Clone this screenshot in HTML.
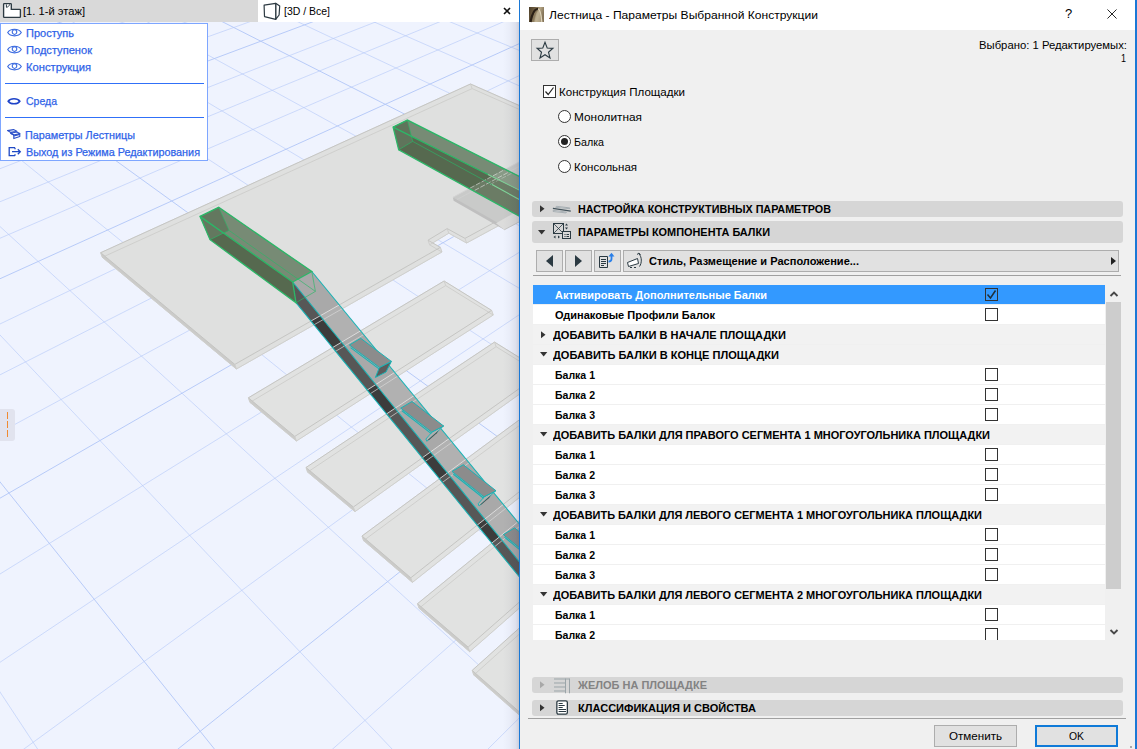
<!DOCTYPE html>
<html lang="ru"><head><meta charset="utf-8"><title>Лестница - Параметры Выбранной Конструкции</title>
<style>
*{box-sizing:border-box;margin:0;padding:0}
html,body{width:1137px;height:749px;overflow:hidden;background:#eff3fe}
body{position:relative;font-family:"Liberation Sans",sans-serif;font-size:12px;color:#000}
.t{position:absolute;white-space:nowrap;line-height:16px;height:16px;transform-origin:0 50%;display:block}
.abs{position:absolute}
#scene{position:absolute;left:0;top:0;width:519px;height:749px}
#tabs{position:absolute;left:0;top:0;width:519px;height:22px;background:#fff}
#tab1{position:absolute;left:0;top:0;width:258px;height:22px;background:#d9d9d9}
#menu{position:absolute;left:0;top:23px;width:208px;height:138px;background:#fff;border:1px solid #7ea6ff}
.sep{position:absolute;left:4px;width:199px;height:1px;background:#3070f8}
#dlg{position:absolute;left:519px;top:0;width:618px;height:749px;background:#f0f0f0;border-left:1px solid #1a78d6;border-right:2px solid #1a78d6}
#title{position:absolute;left:0;top:0;width:615px;height:30px;background:#fff}
.hdr{position:absolute;left:12px;width:591px;background:#d6d6d6;border-radius:3px}
.btn{position:absolute;background:#e1e1e1;border:1px solid #adadad}
.row{position:absolute;left:13px;width:572px;height:19px;background:#fff}
.grp{position:absolute;left:13px;width:572px;height:19px;background:#f2f2f2}
.cb{position:absolute;width:13px;height:13px;border:1px solid #333;background:#fff}
.rb{position:absolute;width:13px;height:13px;border:1px solid #333;background:#fff;border-radius:50%}
svg{position:absolute;overflow:visible}
</style></head><body>

<svg id="scene" width="519" height="749" viewBox="0 0 519 749" style="left:0;top:0;overflow:hidden">
<rect width="519" height="749" fill="#eff3fe"/>
<g stroke="#b4c8f8" stroke-width="1" fill="none">
<line x1="-199.6" y1="9.1" x2="534.4" y2="-189.2" stroke-opacity="0.6"/>
<line x1="-195.0" y1="24.5" x2="555.1" y2="-184.5" stroke-opacity="0.95"/>
<line x1="-195.3" y1="42.3" x2="576.6" y2="-179.7" stroke-opacity="0.6"/>
<line x1="-195.6" y1="61.4" x2="598.7" y2="-174.7" stroke-opacity="0.6"/>
<line x1="-195.9" y1="82.0" x2="621.6" y2="-169.5" stroke-opacity="0.6"/>
<line x1="-196.3" y1="104.1" x2="645.2" y2="-164.2" stroke-opacity="0.95"/>
<line x1="-196.7" y1="128.0" x2="669.7" y2="-158.7" stroke-opacity="0.6"/>
<line x1="-197.1" y1="153.9" x2="695.0" y2="-153.0" stroke-opacity="0.6"/>
<line x1="-197.6" y1="182.0" x2="721.2" y2="-147.1" stroke-opacity="0.6"/>
<line x1="-198.1" y1="212.7" x2="748.4" y2="-141.0" stroke-opacity="0.95"/>
<line x1="-198.6" y1="246.3" x2="776.6" y2="-134.7" stroke-opacity="0.6"/>
<line x1="-199.2" y1="283.3" x2="798.5" y2="-125.1" stroke-opacity="0.6"/>
<line x1="-199.9" y1="324.2" x2="798.7" y2="-105.2" stroke-opacity="0.6"/>
<line x1="-192.3" y1="365.8" x2="799.0" y2="-83.0" stroke-opacity="0.95"/>
<line x1="-192.6" y1="416.1" x2="799.4" y2="-58.4" stroke-opacity="0.6"/>
<line x1="-193.0" y1="472.7" x2="799.7" y2="-30.7" stroke-opacity="0.6"/>
<line x1="-193.4" y1="536.8" x2="797.7" y2="2.0" stroke-opacity="0.6"/>
<line x1="-193.9" y1="610.0" x2="798.0" y2="38.0" stroke-opacity="0.95"/>
<line x1="-194.5" y1="694.5" x2="798.4" y2="79.4" stroke-opacity="0.6"/>
<line x1="-195.1" y1="792.9" x2="798.8" y2="127.6" stroke-opacity="0.6"/>
<line x1="-195.9" y1="909.1" x2="799.3" y2="184.4" stroke-opacity="0.6"/>
<line x1="-124.2" y1="990.4" x2="799.8" y2="252.4" stroke-opacity="0.95"/>
<line x1="50.7" y1="998.4" x2="796.5" y2="338.8" stroke-opacity="0.6"/>
<line x1="239.7" y1="995.2" x2="796.9" y2="442.7" stroke-opacity="0.6"/>
<line x1="428.6" y1="992.0" x2="797.4" y2="575.8" stroke-opacity="0.6"/>
<line x1="617.4" y1="988.7" x2="798.0" y2="752.0" stroke-opacity="0.95"/>
<line x1="-198.7" y1="632.6" x2="-9.9" y2="997.9" stroke-opacity="0.6"/>
<line x1="-198.5" y1="391.0" x2="197.5" y2="991.5" stroke-opacity="0.6"/>
<line x1="-198.4" y1="234.8" x2="411.9" y2="995.0" stroke-opacity="0.95"/>
<line x1="-199.9" y1="123.9" x2="628.3" y2="998.5" stroke-opacity="0.6"/>
<line x1="-199.7" y1="43.6" x2="793.7" y2="953.5" stroke-opacity="0.6"/>
<line x1="-143.1" y1="27.3" x2="799.8" y2="789.6" stroke-opacity="0.6"/>
<line x1="-89.7" y1="12.0" x2="796.5" y2="652.8" stroke-opacity="0.95"/>
<line x1="-39.2" y1="-2.6" x2="793.8" y2="542.1" stroke-opacity="0.6"/>
<line x1="8.6" y1="-16.3" x2="798.3" y2="454.7" stroke-opacity="0.6"/>
<line x1="53.9" y1="-29.4" x2="795.9" y2="377.3" stroke-opacity="0.6"/>
<line x1="97.0" y1="-41.8" x2="799.6" y2="314.3" stroke-opacity="0.95"/>
<line x1="138.0" y1="-53.5" x2="797.5" y2="257.1" stroke-opacity="0.6"/>
<line x1="177.0" y1="-64.8" x2="795.6" y2="207.4" stroke-opacity="0.6"/>
<line x1="214.2" y1="-75.5" x2="798.6" y2="165.7" stroke-opacity="0.6"/>
<line x1="249.7" y1="-85.7" x2="796.9" y2="126.9" stroke-opacity="0.95"/>
<line x1="283.6" y1="-95.4" x2="799.6" y2="93.8" stroke-opacity="0.6"/>
<line x1="316.1" y1="-104.7" x2="798.0" y2="62.6" stroke-opacity="0.6"/>
<line x1="347.1" y1="-113.7" x2="796.5" y2="34.5" stroke-opacity="0.6"/>
</g>
<g fill="#dfe0df" stroke="#dfe0df" stroke-width=".6">
<polygon points="102.3,257.3 472.1,88.6 561.6,128.1 561.6,191.6 466.6,243.0 448.8,233.2 429.6,244.8 441.9,252.0 236.4,369.0"/>
<polygon points="100.7,252.7 470.5,84.0 472.1,88.6 102.3,257.3"/>
<polygon points="470.5,84.0 560.0,123.5 561.6,128.1 472.1,88.6"/>
<polygon points="560.0,123.5 560.0,187.0 561.6,191.6 561.6,128.1"/>
<polygon points="560.0,187.0 465.0,238.4 466.6,243.0 561.6,191.6"/>
<polygon points="465.0,238.4 447.2,228.6 448.8,233.2 466.6,243.0"/>
<polygon points="447.2,228.6 428.0,240.2 429.6,244.8 448.8,233.2"/>
<polygon points="428.0,240.2 440.3,247.4 441.9,252.0 429.6,244.8"/>
<polygon points="440.3,247.4 234.8,364.4 236.4,369.0 441.9,252.0"/>
<polygon points="234.8,364.4 100.7,252.7 102.3,257.3 236.4,369.0"/>
<polygon points="100.7,252.7 470.5,84.0 560.0,123.5 560.0,187.0 465.0,238.4 447.2,228.6 428.0,240.2 440.3,247.4 234.8,364.4"/>
</g>
<polygon points="234.8,364.4 100.7,252.7 102.3,257.3 236.4,369.0" fill="#cbcbc9" />
<polygon points="102.3,257.3 472.1,88.6 561.6,128.1 561.6,191.6 466.6,243.0 448.8,233.2 429.6,244.8 441.9,252.0 236.4,369.0" fill="none" stroke="#cdcdcb" stroke-width=".9"/>
<polygon points="100.7,252.7 470.5,84.0 560.0,123.5 560.0,187.0 465.0,238.4 447.2,228.6 428.0,240.2 440.3,247.4 234.8,364.4" fill="none" stroke="#c2c2c0" stroke-width=".9"/>
<line x1="100.7" y1="252.7" x2="102.3" y2="257.3" stroke="#cdcdcb" stroke-width=".9"/>
<line x1="470.5" y1="84.0" x2="472.1" y2="88.6" stroke="#cdcdcb" stroke-width=".9"/>
<line x1="560.0" y1="123.5" x2="561.6" y2="128.1" stroke="#cdcdcb" stroke-width=".9"/>
<line x1="560.0" y1="187.0" x2="561.6" y2="191.6" stroke="#cdcdcb" stroke-width=".9"/>
<line x1="465.0" y1="238.4" x2="466.6" y2="243.0" stroke="#cdcdcb" stroke-width=".9"/>
<line x1="447.2" y1="228.6" x2="448.8" y2="233.2" stroke="#cdcdcb" stroke-width=".9"/>
<line x1="428.0" y1="240.2" x2="429.6" y2="244.8" stroke="#cdcdcb" stroke-width=".9"/>
<line x1="440.3" y1="247.4" x2="441.9" y2="252.0" stroke="#cdcdcb" stroke-width=".9"/>
<line x1="234.8" y1="364.4" x2="236.4" y2="369.0" stroke="#cdcdcb" stroke-width=".9"/>
<g fill="#e1e2e1" stroke="#e1e2e1" stroke-width=".6">
<polygon points="250.0,402.4 445.7,285.6 493.2,315.0 296.4,441.0"/>
<polygon points="248.4,397.8 444.1,281.0 445.7,285.6 250.0,402.4"/>
<polygon points="444.1,281.0 491.6,310.4 493.2,315.0 445.7,285.6"/>
<polygon points="491.6,310.4 294.8,436.4 296.4,441.0 493.2,315.0"/>
<polygon points="294.8,436.4 248.4,397.8 250.0,402.4 296.4,441.0"/>
<polygon points="248.4,397.8 444.1,281.0 491.6,310.4 294.8,436.4"/>
</g>
<polygon points="294.8,436.4 248.4,397.8 250.0,402.4 296.4,441.0" fill="#cbcbc9" />
<polygon points="250.0,402.4 445.7,285.6 493.2,315.0 296.4,441.0" fill="none" stroke="#cdcdcb" stroke-width=".9"/>
<polygon points="248.4,397.8 444.1,281.0 491.6,310.4 294.8,436.4" fill="none" stroke="#c2c2c0" stroke-width=".9"/>
<line x1="248.4" y1="397.8" x2="250.0" y2="402.4" stroke="#cdcdcb" stroke-width=".9"/>
<line x1="444.1" y1="281.0" x2="445.7" y2="285.6" stroke="#cdcdcb" stroke-width=".9"/>
<line x1="491.6" y1="310.4" x2="493.2" y2="315.0" stroke="#cdcdcb" stroke-width=".9"/>
<line x1="294.8" y1="436.4" x2="296.4" y2="441.0" stroke="#cdcdcb" stroke-width=".9"/>
<g fill="#e1e2e1" stroke="#e1e2e1" stroke-width=".6">
<polygon points="307.6,472.1 496.1,346.7 544.2,376.5 355.0,511.6"/>
<polygon points="306.0,467.5 494.5,342.1 496.1,346.7 307.6,472.1"/>
<polygon points="494.5,342.1 542.6,371.9 544.2,376.5 496.1,346.7"/>
<polygon points="542.6,371.9 353.4,507.0 355.0,511.6 544.2,376.5"/>
<polygon points="353.4,507.0 306.0,467.5 307.6,472.1 355.0,511.6"/>
<polygon points="306.0,467.5 494.5,342.1 542.6,371.9 353.4,507.0"/>
</g>
<polygon points="353.4,507.0 306.0,467.5 307.6,472.1 355.0,511.6" fill="#cbcbc9" />
<polygon points="307.6,472.1 496.1,346.7 544.2,376.5 355.0,511.6" fill="none" stroke="#cdcdcb" stroke-width=".9"/>
<polygon points="306.0,467.5 494.5,342.1 542.6,371.9 353.4,507.0" fill="none" stroke="#c2c2c0" stroke-width=".9"/>
<line x1="306.0" y1="467.5" x2="307.6" y2="472.1" stroke="#cdcdcb" stroke-width=".9"/>
<line x1="494.5" y1="342.1" x2="496.1" y2="346.7" stroke="#cdcdcb" stroke-width=".9"/>
<line x1="542.6" y1="371.9" x2="544.2" y2="376.5" stroke="#cdcdcb" stroke-width=".9"/>
<line x1="353.4" y1="507.0" x2="355.0" y2="511.6" stroke="#cdcdcb" stroke-width=".9"/>
<g fill="#e1e2e1" stroke="#e1e2e1" stroke-width=".6">
<polygon points="363.6,540.6 545.1,406.6 594.2,438.2 412.4,582.4"/>
<polygon points="362.0,536.0 543.5,402.0 545.1,406.6 363.6,540.6"/>
<polygon points="543.5,402.0 592.6,433.6 594.2,438.2 545.1,406.6"/>
<polygon points="592.6,433.6 410.8,577.8 412.4,582.4 594.2,438.2"/>
<polygon points="410.8,577.8 362.0,536.0 363.6,540.6 412.4,582.4"/>
<polygon points="362.0,536.0 543.5,402.0 592.6,433.6 410.8,577.8"/>
</g>
<polygon points="410.8,577.8 362.0,536.0 363.6,540.6 412.4,582.4" fill="#cbcbc9" />
<polygon points="363.6,540.6 545.1,406.6 594.2,438.2 412.4,582.4" fill="none" stroke="#cdcdcb" stroke-width=".9"/>
<polygon points="362.0,536.0 543.5,402.0 592.6,433.6 410.8,577.8" fill="none" stroke="#c2c2c0" stroke-width=".9"/>
<line x1="362.0" y1="536.0" x2="363.6" y2="540.6" stroke="#cdcdcb" stroke-width=".9"/>
<line x1="543.5" y1="402.0" x2="545.1" y2="406.6" stroke="#cdcdcb" stroke-width=".9"/>
<line x1="592.6" y1="433.6" x2="594.2" y2="438.2" stroke="#cdcdcb" stroke-width=".9"/>
<line x1="410.8" y1="577.8" x2="412.4" y2="582.4" stroke="#cdcdcb" stroke-width=".9"/>
<g fill="#e1e2e1" stroke="#e1e2e1" stroke-width=".6">
<polygon points="419.1,608.3 593.7,465.9 644.1,498.6 469.7,651.7"/>
<polygon points="417.5,603.7 592.1,461.3 593.7,465.9 419.1,608.3"/>
<polygon points="592.1,461.3 642.5,494.0 644.1,498.6 593.7,465.9"/>
<polygon points="642.5,494.0 468.1,647.1 469.7,651.7 644.1,498.6"/>
<polygon points="468.1,647.1 417.5,603.7 419.1,608.3 469.7,651.7"/>
<polygon points="417.5,603.7 592.1,461.3 642.5,494.0 468.1,647.1"/>
</g>
<polygon points="468.1,647.1 417.5,603.7 419.1,608.3 469.7,651.7" fill="#cbcbc9" />
<polygon points="419.1,608.3 593.7,465.9 644.1,498.6 469.7,651.7" fill="none" stroke="#cdcdcb" stroke-width=".9"/>
<polygon points="417.5,603.7 592.1,461.3 642.5,494.0 468.1,647.1" fill="none" stroke="#c2c2c0" stroke-width=".9"/>
<line x1="417.5" y1="603.7" x2="419.1" y2="608.3" stroke="#cdcdcb" stroke-width=".9"/>
<line x1="592.1" y1="461.3" x2="593.7" y2="465.9" stroke="#cdcdcb" stroke-width=".9"/>
<line x1="642.5" y1="494.0" x2="644.1" y2="498.6" stroke="#cdcdcb" stroke-width=".9"/>
<line x1="468.1" y1="647.1" x2="469.7" y2="651.7" stroke="#cdcdcb" stroke-width=".9"/>
<g fill="#e1e2e1" stroke="#e1e2e1" stroke-width=".6">
<polygon points="473.8,675.0 641.6,524.3 694.2,559.8 527.2,722.0"/>
<polygon points="472.2,670.4 640.0,519.7 641.6,524.3 473.8,675.0"/>
<polygon points="640.0,519.7 692.6,555.2 694.2,559.8 641.6,524.3"/>
<polygon points="692.6,555.2 525.6,717.4 527.2,722.0 694.2,559.8"/>
<polygon points="525.6,717.4 472.2,670.4 473.8,675.0 527.2,722.0"/>
<polygon points="472.2,670.4 640.0,519.7 692.6,555.2 525.6,717.4"/>
</g>
<polygon points="525.6,717.4 472.2,670.4 473.8,675.0 527.2,722.0" fill="#cbcbc9" />
<polygon points="473.8,675.0 641.6,524.3 694.2,559.8 527.2,722.0" fill="none" stroke="#cdcdcb" stroke-width=".9"/>
<polygon points="472.2,670.4 640.0,519.7 692.6,555.2 525.6,717.4" fill="none" stroke="#c2c2c0" stroke-width=".9"/>
<line x1="472.2" y1="670.4" x2="473.8" y2="675.0" stroke="#cdcdcb" stroke-width=".9"/>
<line x1="640.0" y1="519.7" x2="641.6" y2="524.3" stroke="#cdcdcb" stroke-width=".9"/>
<line x1="692.6" y1="555.2" x2="694.2" y2="559.8" stroke="#cdcdcb" stroke-width=".9"/>
<line x1="525.6" y1="717.4" x2="527.2" y2="722.0" stroke="#cdcdcb" stroke-width=".9"/>
<polygon points="452.9,197.3 518.8,162.0 560.0,181.0 560.0,201.0 504.3,229.5" fill="#c9cac9"/>
<polygon points="452.9,197.3 503.8,226.2 504.3,229.8 453.6,200.8" fill="#bfbfbf"/>
<polygon points="496.0,223.2 519.0,210.2 519.0,222.0 504.3,229.8" fill="#dcdcdb"/>
<polyline points="452.9,197.3 518.8,162.0" fill="none" stroke="#d4d4d4" stroke-width="1"/>
<polyline points="457.0,199.5 519.0,166.5" fill="none" stroke="#d0d0d0" stroke-width=".8"/>
<polyline points="504.3,229.8 519.0,222.0" fill="none" stroke="#c2c2c0" stroke-width=".9"/>
<polygon points="393.1,127.1 407.4,120.1 560.0,197.0 560.0,238.5 398.7,149.8" fill="#56694f"/>
<polygon points="393.1,127.1 407.4,120.1 560.0,197.0 560.0,210.5" fill="#778b75"/>
<polygon points="393.1,127.1 407.4,120.1 412.7,141.4 398.7,149.8" fill="#5f745b"/>
<defs><clipPath id="b2c"><polygon points="393.1,127.1 407.4,120.1 560.0,197.0 560.0,238.5 398.7,149.8"/></clipPath></defs>
<g clip-path="url(#b2c)"><polygon points="452.9,197.3 518.8,162.0 560.0,181.0 560.0,201.0 504.3,229.5" fill="#fff" fill-opacity=".13"/>
<g fill="none" stroke="#f2f2f2" stroke-width=".9" stroke-dasharray="5 1.500" stroke-opacity=".6"><polyline points="452.9,197.3 518.8,162.0"/><polyline points="457.5,199.6 519.0,166.6"/><polyline points="490.0,184.5 519.0,169.5" stroke-opacity=".35"/></g></g>
<g fill="none" stroke="#2bb868" stroke-width="1.3"><polygon points="393.1,127.1 407.4,120.1 560.0,197.0 560.0,238.5 398.7,149.8"/><polyline points="393.1,127.1 488.0,174.5"/></g>
<g fill="none" stroke="#7fd69a" stroke-width="1.1"><polyline points="488.0,174.5 560.0,210.5"/><polyline points="492.0,184.6 560.0,221.5"/></g>
<g fill="none" stroke="#2bb868" stroke-width=".8" opacity=".8"><polyline points="407.4,120.1 412.7,141.4 398.7,149.8"/><polyline points="412.7,141.4 492.0,184.6"/></g>
<polygon points="200.0,216.4 218.7,207.3 311.8,271.5 292.7,282.0 296.0,302.7 210.0,239.7" fill="#56694f"/>
<polygon points="200.0,216.4 218.7,207.3 311.8,271.5 292.7,282.0" fill="#778b75"/>
<polygon points="200.0,216.4 218.7,207.3 229.0,230.4 210.0,239.7" fill="#63785f"/>
<defs><clipPath id="strc">
<polygon points="292.7,282.0 311.8,271.5 598.3,620.0 554.5,620.0 296.0,302.7"/>
</clipPath></defs>
<polygon points="292.7,282.0 311.8,271.5 598.3,620.0 566.5,620.0" fill="#b1b1b1"/>
<polygon points="292.7,282.0 566.5,620.0 554.5,620.0 296.0,302.7" fill="#3c3c3c"/>
<g clip-path="url(#strc)">
<g fill="#999" fill-opacity=".3" stroke="none"><polygon points="100.7,252.7 470.5,84.0 560.0,123.5 560.0,187.0 465.0,238.4 447.2,228.6 428.0,240.2 440.3,247.4 234.8,364.4"/></g>
<g fill="#999" fill-opacity=".3" stroke="none"><polygon points="248.4,397.8 444.1,281.0 491.6,310.4 294.8,436.4"/></g>
<g fill="#999" fill-opacity=".3" stroke="none"><polygon points="306.0,467.5 494.5,342.1 542.6,371.9 353.4,507.0"/></g>
<g fill="#999" fill-opacity=".3" stroke="none"><polygon points="362.0,536.0 543.5,402.0 592.6,433.6 410.8,577.8"/></g>
<g fill="#999" fill-opacity=".3" stroke="none"><polygon points="417.5,603.7 592.1,461.3 642.5,494.0 468.1,647.1"/></g>
<g fill="#999" fill-opacity=".3" stroke="none"><polygon points="472.2,670.4 640.0,519.7 692.6,555.2 525.6,717.4"/></g>
<polygon points="100.7,252.7 470.5,84.0 560.0,123.5 560.0,187.0 465.0,238.4 447.2,228.6 428.0,240.2 440.3,247.4 234.8,364.4" fill="none" stroke="#e4e4e4" stroke-width="1" stroke-opacity=".85"/>
<polygon points="102.3,257.3 472.1,88.6 561.6,128.1 561.6,191.6 466.6,243.0 448.8,233.2 429.6,244.8 441.9,252.0 236.4,369.0" fill="none" stroke="#d8d8d8" stroke-width="1" stroke-opacity=".7"/>
<polygon points="248.4,397.8 444.1,281.0 491.6,310.4 294.8,436.4" fill="none" stroke="#e4e4e4" stroke-width="1" stroke-opacity=".85"/>
<polygon points="250.0,402.4 445.7,285.6 493.2,315.0 296.4,441.0" fill="none" stroke="#d8d8d8" stroke-width="1" stroke-opacity=".7"/>
<polygon points="306.0,467.5 494.5,342.1 542.6,371.9 353.4,507.0" fill="none" stroke="#e4e4e4" stroke-width="1" stroke-opacity=".85"/>
<polygon points="307.6,472.1 496.1,346.7 544.2,376.5 355.0,511.6" fill="none" stroke="#d8d8d8" stroke-width="1" stroke-opacity=".7"/>
<polygon points="362.0,536.0 543.5,402.0 592.6,433.6 410.8,577.8" fill="none" stroke="#e4e4e4" stroke-width="1" stroke-opacity=".85"/>
<polygon points="363.6,540.6 545.1,406.6 594.2,438.2 412.4,582.4" fill="none" stroke="#d8d8d8" stroke-width="1" stroke-opacity=".7"/>
<polygon points="417.5,603.7 592.1,461.3 642.5,494.0 468.1,647.1" fill="none" stroke="#e4e4e4" stroke-width="1" stroke-opacity=".85"/>
<polygon points="419.1,608.3 593.7,465.9 644.1,498.6 469.7,651.7" fill="none" stroke="#d8d8d8" stroke-width="1" stroke-opacity=".7"/>
<polygon points="472.2,670.4 640.0,519.7 692.6,555.2 525.6,717.4" fill="none" stroke="#e4e4e4" stroke-width="1" stroke-opacity=".85"/>
<polygon points="473.8,675.0 641.6,524.3 694.2,559.8 527.2,722.0" fill="none" stroke="#d8d8d8" stroke-width="1" stroke-opacity=".7"/>
</g>
<g fill="none" stroke="#17b4b6" stroke-width="1.05"><polyline points="311.8,271.5 598.3,620.0"/><polyline points="292.7,282.0 566.5,620.0"/><polyline points="296.0,302.7 554.5,620.0"/></g>
<polygon points="379.4,367.4 391.4,361.4 386.0,372.0 375.4,377.4" fill="#5c5c5c" stroke="#17b4b6" stroke-width="1"/>
<polygon points="349.4,345.0 360.7,338.3 391.4,361.4 379.4,367.4" fill="#8c8c8c" stroke="#17b4b6" stroke-width="1"/>
<polyline points="350.6,347.6 379.0,368.9" fill="none" stroke="#17b4b6" stroke-width="1.1"/>
<polygon points="432.1,432.0 443.5,425.8 439.1,430.2 426.8,441.3 425.9,439.0" fill="#b0b0b0" stroke="#17b4b6" stroke-width=".9"/>
<polygon points="438.6,430.5 427.5,440.3 429.1,439.9 436.8,433.2" fill="#4c4c4c"/>
<polygon points="400.7,408.2 412.0,401.5 443.7,426.1 431.7,432.1" fill="#8c8c8c" stroke="#17b4b6" stroke-width="1"/>
<polyline points="401.9,410.8 431.3,433.6" fill="none" stroke="#17b4b6" stroke-width="1.1"/>
<polygon points="484.4,496.7 495.8,490.5 491.4,494.9 479.1,506.0 478.2,503.7" fill="#b0b0b0" stroke="#17b4b6" stroke-width=".9"/>
<polygon points="490.9,495.2 479.8,505.0 481.4,504.6 489.1,497.9" fill="#4c4c4c"/>
<polygon points="452.0,471.4 463.3,464.7 496.0,490.8 484.0,496.8" fill="#8c8c8c" stroke="#17b4b6" stroke-width="1"/>
<polyline points="453.2,474.0 483.6,498.3" fill="none" stroke="#17b4b6" stroke-width="1.1"/>
<polygon points="536.7,561.4 548.1,555.2 543.7,559.6 531.4,570.7 530.5,568.4" fill="#b0b0b0" stroke="#17b4b6" stroke-width=".9"/>
<polygon points="543.2,559.9 532.1,569.7 533.7,569.3 541.4,562.6" fill="#4c4c4c"/>
<polygon points="503.3,534.6 514.6,527.9 548.3,555.5 536.3,561.5" fill="#8c8c8c" stroke="#17b4b6" stroke-width="1"/>
<polyline points="504.5,537.2 535.9,563.0" fill="none" stroke="#17b4b6" stroke-width="1.1"/>
<g fill="none" stroke="#2bb868" stroke-width="1.3"><polygon points="200.0,216.4 218.7,207.3 311.8,271.5 292.7,282.0 296.0,302.7 210.0,239.7"/><polyline points="200.0,216.4 292.7,282.0"/></g>
<g fill="none" stroke="#2bb868" stroke-width=".8" opacity=".8"><polyline points="218.7,207.3 229.0,230.4 210.0,239.7"/><polyline points="229.0,230.4 315.4,291.4 311.8,271.5"/><polyline points="315.4,291.4 296.0,302.7"/></g>
</svg>
<div id="tabs"><div id="tab1"></div>
<svg style="left:2px;top:2px" width="20" height="17" viewBox="0 0 20 17"><path d="M2.300 1.600H8.600Q9.300 1.600 9.300 2.300V7.300H17.700Q18.400 7.300 18.400 8V14.700Q18.400 15.400 17.700 15.400H2.300Q1.600 15.400 1.600 14.700V2.300Q1.600 1.600 2.300 1.600Z" fill="#fff" stroke="#2d3a42" stroke-width="1.350"/><path d="M4.400 2.400V5.300C6 5.100 7.300 3.900 7.600 2.400" fill="none" stroke="#2d3a42" stroke-width="1"/></svg>
<span class="t" style="transform:scaleX(1.0148);left:23px;top:3px;font-size:11px;color:#000;">[1. 1-й этаж]</span>
<svg style="left:263px;top:2px" width="18" height="19" viewBox="0 0 18 19"><g fill="#fff" stroke="#2d3a42" stroke-width="1.200" stroke-linejoin="round"><path d="M12.700 1.300L16.700 4L16.100 13L12.700 17.400Z"/><path d="M1.100 3.200L12.700 1.300V17.400L1.500 14.600Z"/></g></svg>
<span class="t" style="transform:scaleX(0.9524);left:284px;top:3px;font-size:11px;color:#000;">[3D / Все]</span>
<svg style="left:502.500px;top:7px" width="8" height="8" viewBox="0 0 8 8"><path d="M1 1L7 7M7 1L1 7" stroke="#111" stroke-width="1.6"/></svg>
</div>
<div id="menu">
<svg style="left:5.5px;top:4.2px" width="15" height="10" viewBox="0 0 15 10"><path d="M0.700 4.600C3.200 0.200 11.800 0.200 14.300 4.600C11.800 9 3.200 9 0.700 4.600Z" fill="none" stroke="#3a6ae0" stroke-width="1.100"/><circle cx="7.500" cy="4.100" r="2.300" fill="none" stroke="#3a6ae0" stroke-width="1.050"/></svg>
<svg style="left:5.5px;top:21.2px" width="15" height="10" viewBox="0 0 15 10"><path d="M0.700 4.600C3.200 0.200 11.800 0.200 14.300 4.600C11.800 9 3.200 9 0.700 4.600Z" fill="none" stroke="#3a6ae0" stroke-width="1.100"/><circle cx="7.500" cy="4.100" r="2.300" fill="none" stroke="#3a6ae0" stroke-width="1.050"/></svg>
<svg style="left:5.5px;top:38.2px" width="15" height="10" viewBox="0 0 15 10"><path d="M0.700 4.600C3.200 0.200 11.800 0.200 14.300 4.600C11.800 9 3.200 9 0.700 4.600Z" fill="none" stroke="#3a6ae0" stroke-width="1.100"/><circle cx="7.500" cy="4.100" r="2.300" fill="none" stroke="#3a6ae0" stroke-width="1.050"/></svg>
<svg style="left:6px;top:72.500px" width="14" height="9" viewBox="0 0 14 9"><path d="M1.200 4.200C3.500 0.900 10.500 0.900 12.800 4.200C10.500 7.600 3.500 7.600 1.200 4.200Z" fill="none" stroke="#1f44c8" stroke-width="1.650"/></svg>
<svg style="left:6px;top:105px" width="14" height="11" viewBox="0 0 14 11"><g fill="none" stroke="#2c50c8" stroke-width="1.100" stroke-linejoin="round"><path d="M0.500 1.600L6.500 0.600L9.800 2.200L3.800 3.400Z"/><path d="M3.800 3.400V4.400L6.800 6V5"/><path d="M3.800 4.200L9.800 3L12.800 4.600L6.800 6Z"/><path d="M6.800 6V9.600L12.800 7.600V4.600"/><path d="M6.800 7L12.800 5.400"/></g></svg>
<svg style="left:7px;top:123px" width="14" height="10" viewBox="0 0 14 10"><g fill="none" stroke="#1f49c4" stroke-width="1.300"><path d="M7 0.700H1.200V8.700H7M7 0.700V2.200M7 7.200V8.700"/><path d="M4 4.700H12.300M9.800 2.200L12.300 4.700L9.800 7.200"/></g></svg>
<span class="t" style="transform:scaleX(1.0000);left:25px;top:1px;font-size:11px;color:#2f63e8;-webkit-text-stroke:.25px #2f63e8;">Проступь</span>
<span class="t" style="transform:scaleX(1.0084);left:25px;top:18px;font-size:11px;color:#2f63e8;-webkit-text-stroke:.25px #2f63e8;">Подступенок</span>
<span class="t" style="transform:scaleX(1.0179);left:25px;top:35px;font-size:11px;color:#2f63e8;-webkit-text-stroke:.25px #2f63e8;">Конструкция</span>
<div class="sep" style="top:59px"></div>
<span class="t" style="transform:scaleX(0.9543);left:25px;top:69px;font-size:11px;color:#2f63e8;-webkit-text-stroke:.25px #2f63e8;">Среда</span>
<div class="sep" style="top:93px"></div>
<span class="t" style="transform:scaleX(0.9821);left:24px;top:103px;font-size:11px;color:#2f63e8;-webkit-text-stroke:.25px #2f63e8;">Параметры Лестницы</span>
<span class="t" style="transform:scaleX(0.9834);left:25px;top:120px;font-size:11px;color:#2f63e8;-webkit-text-stroke:.25px #2f63e8;">Выход из Режима Редактирования</span>
</div>
<div class="abs" style="left:0;top:409px;width:15px;height:32px;background:#e1e3ee;border-radius:0 3px 3px 0"></div>
<div class="abs" style="left:7px;top:412px;width:1px;height:26px;background:repeating-linear-gradient(#f08a30 0 7px,transparent 7px 9px)"></div>
<div class="abs" style="left:503px;top:22px;width:16px;height:727px;background:linear-gradient(90deg,rgba(60,60,90,0) 0%,rgba(60,60,90,.03) 40%,rgba(60,60,90,.1) 80%,rgba(60,60,90,.2) 100%)"></div>
<div id="dlg"><div id="title"></div>
<svg style="left:9px;top:7px" width="15" height="15" viewBox="0 0 15 15"><defs><linearGradient id="ig" x1="0" y1="0" x2="1" y2="0.300"><stop offset="0" stop-color="#4a3c28"/><stop offset=".35" stop-color="#6b5a3e"/><stop offset=".7" stop-color="#b5a585"/><stop offset="1" stop-color="#85755a"/></linearGradient></defs><rect width="15" height="15" fill="url(#ig)"/><path d="M5.500 15C6.500 8 8 4 9.500 3.500C11 3.500 11.500 8 12 15Z" fill="#c9bda0" opacity=".55"/><path d="M1.500 15C3 7 5.500 1.500 9 1.800" fill="none" stroke="#2a2016" stroke-width="2.200"/><path d="M9 1.800C11.500 2.500 12.300 8 12.800 15" fill="none" stroke="#ddd2b8" stroke-width="1.300"/><path d="M3.500 15C5 8 6.500 4.500 8.500 3.800" fill="none" stroke="#8a7a5c" stroke-width="1"/></svg>
<span class="t" style="transform:scaleX(1.0968);left:29px;top:7px;font-size:11px;color:#000;">Лестница - Параметры Выбранной Конструкции</span>
<span class="t" style="left:545px;top:6px;font-size:13px;color:#000;">?</span>
<svg style="left:587px;top:9px" width="10" height="10" viewBox="0 0 11 11"><path d="M0.5 0.5L10.5 10.5M10.5 0.5L0.5 10.5" stroke="#111" stroke-width="1"/></svg>
<div class="btn" style="left:11px;top:39px;width:28px;height:22px"></div>
<svg style="left:16px;top:40.700px" width="18" height="18" viewBox="0 0 18 17" preserveAspectRatio="none"><path d="M9 1.2L11.2 6.6L16.9 6.9L12.5 10.6L14 16.1L9 13L4 16.1L5.5 10.6L1.1 6.9L6.8 6.6Z" fill="none" stroke="#2b3a42" stroke-width="1.1" stroke-linejoin="miter"/></svg>
<span class="t" style="transform:scaleX(1.0267);left:459px;top:37px;font-size:11px;color:#000;">Выбрано: 1 Редактируемых:</span>
<span class="t" style="transform:scaleX(0.8163);left:601px;top:50px;font-size:11px;color:#000;">1</span>
<div class="cb" style="left:23px;top:85px"></div>
<svg style="left:24px;top:86px" width="11" height="11" viewBox="0 0 11 11"><path d="M1.5 5.5L4.2 8.5L9.5 1.5" fill="none" stroke="#222" stroke-width="1.2"/></svg>
<span class="t" style="transform:scaleX(1.0499);left:39px;top:84px;font-size:11px;color:#000;">Конструкция Площадки</span>
<div class="rb" style="left:38px;top:110px"></div>
<span class="t" style="transform:scaleX(1.0775);left:54px;top:109px;font-size:11px;color:#000;">Монолитная</span>
<div class="rb" style="left:38px;top:135px"></div><div class="abs" style="left:41px;top:138px;width:7px;height:7px;border-radius:50%;background:#222"></div>
<span class="t" style="transform:scaleX(0.9697);left:54px;top:134px;font-size:11px;color:#000;">Балка</span>
<div class="rb" style="left:38px;top:160px"></div>
<span class="t" style="transform:scaleX(1.0429);left:54px;top:159px;font-size:11px;color:#000;">Консольная</span>
<div class="hdr" style="top:201px;height:16px"></div>
<svg style="left:20px;top:205px" width="4.500" height="7.500" viewBox="0 0 5 8"><path d="M0 0L5 4L0 8Z" fill="#333"/></svg>
<svg style="left:32px;top:205px" width="20" height="9" viewBox="0 0 20 9"><path d="M4.600 1.300L17.700 2.900V3.700L3.600 2.300Z" fill="#eceeef" stroke="#8f9a9f" stroke-width=".700"/><path d="M1.200 5.300L14.500 7.100L13.900 7.900L1.200 6.500Z" fill="#eceeef" stroke="#8f9a9f" stroke-width=".700"/><path d="M0.900 3.400L18.800 6.100" stroke="#44535b" stroke-width="1.100" fill="none"/></svg>
<span class="t" style="transform:scaleX(0.9353);left:58px;top:201px;font-size:11.5px;color:#000;font-weight:bold;">НАСТРОЙКА КОНСТРУКТИВНЫХ ПАРАМЕТРОВ</span>
<div class="hdr" style="top:221px;height:22px"></div>
<svg style="left:17px;top:230px;margin-left:.700px" width="7.300" height="4.600" viewBox="0 0 8 5"><path d="M0 0H8L4 5Z" fill="#333"/></svg>
<svg style="left:33px;top:223px" width="19" height="17" viewBox="0 0 19 17"><g fill="none" stroke="#2b3a42" stroke-width="1"><rect x="0.5" y="0.5" width="10" height="10"/><path d="M1 1L10 10M10 1L1 10" stroke-width=".8"/><rect x="9.500" y="8.500" width="8" height="7" fill="#d9d9d9"/><path d="M11.500 11.500H12.500M13.500 11.500H16M11.500 13.500H12.500M13.500 13.500H16"/></g><g fill="#2b3a42"><path d="M12 2.500L13.500 0.500L15 2.500ZM12 4.500L13.500 6.500L15 4.500ZM2.500 12.500L0.500 14L2.500 15.500ZM5 12.500L7 14L5 15.500Z"/></g></svg>
<span class="t" style="transform:scaleX(0.9486);left:58px;top:224px;font-size:11.5px;color:#000;font-weight:bold;">ПАРАМЕТРЫ КОМПОНЕНТА БАЛКИ</span>
<div class="btn" style="left:16px;top:250px;width:27px;height:22px"></div>
<svg style="left:26px;top:255px" width="7" height="12" viewBox="0 0 7 12"><path d="M7 0L0 6L7 12Z" fill="#2b3a42"/></svg>
<div class="btn" style="left:45px;top:250px;width:27px;height:22px"></div>
<svg style="left:55px;top:255px" width="7" height="12" viewBox="0 0 7 12"><path d="M0 0L7 6L0 12Z" fill="#2b3a42"/></svg>
<div class="btn" style="left:74px;top:250px;width:27px;height:22px"></div>
<svg style="left:78px;top:252px" width="18" height="18" viewBox="0 0 18 18"><path d="M1.500 4.500H9.500V15.500H1.500Z" fill="none" stroke="#2b3a42"/><path d="M3 7.500H8M3 9.500H8M3 11.500H8M3 13.500H6" stroke="#2b3a42"/><path d="M13.500 2.500V7C13.500 9 12 9.500 10.500 9.500" fill="none" stroke="#2a7fe8" stroke-width="1.800"/><path d="M10.500 4.500L13.500 0.800L16.500 4.500Z" fill="#2a7fe8"/></svg>
<div class="btn" style="left:103px;top:250px;width:496px;height:22px"></div>
<svg style="left:106px;top:252px" width="20" height="17" viewBox="0 0 20 17"><g fill="none" stroke="#2b3a42" stroke-width="1"><path d="M1.500 10.500L11.500 6.500L12.500 11.500L2.500 14.500Z" fill="#fff"/><path d="M13 2C16 5 16 11 13.500 14.500"/><path d="M11 2.500L13 1L14.500 3"/><path d="M4 15.500H6M8 15.500H10" /></g></svg>
<span class="t" style="transform:scaleX(0.9609);left:129px;top:253px;font-size:11.5px;color:#000;font-weight:bold;">Стиль, Размещение и Расположение...</span>
<svg style="left:591px;top:257px" width="5" height="8" viewBox="0 0 5 8"><path d="M0 0L5 4L0 8Z" fill="#222"/></svg>
<div class="abs" style="left:13px;top:275px;width:588px;height:1px;background:#a0a0a0"></div>
<div class="abs" style="left:13px;top:285px;width:572px;height:355px;background:#f0f0f0;overflow:hidden"></div>
<div class="abs" style="left:0;top:285px;width:615px;height:355px;overflow:hidden">
<div class="row" style="top:0px;background:#3399ff"></div>
<span class="t" style="transform:scaleX(0.9546);left:35px;top:2px;font-size:11.5px;color:#fff;font-weight:bold;">Активировать Дополнительные Балки</span>
<div class="cb" style="left:465px;top:3px;background:#3399ff;"></div>
<svg style="left:466px;top:4px" width="11" height="11" viewBox="0 0 11 11"><path d="M1.500 5.500L4.500 9L9.500 1.500" fill="none" stroke="#1e2e3a" stroke-width="1.500"/></svg>
<div class="row" style="top:20px;background:#fff"></div>
<span class="t" style="transform:scaleX(0.9575);left:35px;top:22px;font-size:11.5px;color:#000;font-weight:bold;">Одинаковые Профили Балок</span>
<div class="cb" style="left:465px;top:23px;"></div>
<div class="grp" style="top:40px"></div>
<svg style="left:21px;top:46px" width="4.500" height="7.500" viewBox="0 0 5 8"><path d="M0 0L5 4L0 8Z" fill="#333"/></svg>
<span class="t" style="transform:scaleX(0.9586);left:33px;top:42px;font-size:11.5px;color:#000;font-weight:bold;">ДОБАВИТЬ БАЛКИ В НАЧАЛЕ ПЛОЩАДКИ</span>
<div class="grp" style="top:60px"></div>
<svg style="left:19px;top:67px;margin-left:.700px" width="7.300" height="4.600" viewBox="0 0 8 5"><path d="M0 0H8L4 5Z" fill="#333"/></svg>
<span class="t" style="transform:scaleX(0.9601);left:33px;top:62px;font-size:11.5px;color:#000;font-weight:bold;">ДОБАВИТЬ БАЛКИ В КОНЦЕ ПЛОЩАДКИ</span>
<div class="row" style="top:80px;background:#fff"></div>
<span class="t" style="transform:scaleX(0.9149);left:35px;top:82px;font-size:11.5px;color:#000;font-weight:bold;">Балка 1</span>
<div class="cb" style="left:465px;top:83px;"></div>
<div class="row" style="top:100px;background:#fff"></div>
<span class="t" style="transform:scaleX(0.9149);left:35px;top:102px;font-size:11.5px;color:#000;font-weight:bold;">Балка 2</span>
<div class="cb" style="left:465px;top:103px;"></div>
<div class="row" style="top:120px;background:#fff"></div>
<span class="t" style="transform:scaleX(0.9149);left:35px;top:122px;font-size:11.5px;color:#000;font-weight:bold;">Балка 3</span>
<div class="cb" style="left:465px;top:123px;"></div>
<div class="grp" style="top:140px"></div>
<svg style="left:19px;top:147px;margin-left:.700px" width="7.300" height="4.600" viewBox="0 0 8 5"><path d="M0 0H8L4 5Z" fill="#333"/></svg>
<span class="t" style="transform:scaleX(0.9548);left:33px;top:142px;font-size:11.5px;color:#000;font-weight:bold;">ДОБАВИТЬ БАЛКИ ДЛЯ ПРАВОГО СЕГМЕНТА 1 МНОГОУГОЛЬНИКА ПЛОЩАДКИ</span>
<div class="row" style="top:160px;background:#fff"></div>
<span class="t" style="transform:scaleX(0.9149);left:35px;top:162px;font-size:11.5px;color:#000;font-weight:bold;">Балка 1</span>
<div class="cb" style="left:465px;top:163px;"></div>
<div class="row" style="top:180px;background:#fff"></div>
<span class="t" style="transform:scaleX(0.9149);left:35px;top:182px;font-size:11.5px;color:#000;font-weight:bold;">Балка 2</span>
<div class="cb" style="left:465px;top:183px;"></div>
<div class="row" style="top:200px;background:#fff"></div>
<span class="t" style="transform:scaleX(0.9149);left:35px;top:202px;font-size:11.5px;color:#000;font-weight:bold;">Балка 3</span>
<div class="cb" style="left:465px;top:203px;"></div>
<div class="grp" style="top:220px"></div>
<svg style="left:19px;top:227px;margin-left:.700px" width="7.300" height="4.600" viewBox="0 0 8 5"><path d="M0 0H8L4 5Z" fill="#333"/></svg>
<span class="t" style="transform:scaleX(0.9529);left:33px;top:222px;font-size:11.5px;color:#000;font-weight:bold;">ДОБАВИТЬ БАЛКИ ДЛЯ ЛЕВОГО СЕГМЕНТА 1 МНОГОУГОЛЬНИКА ПЛОЩАДКИ</span>
<div class="row" style="top:240px;background:#fff"></div>
<span class="t" style="transform:scaleX(0.9149);left:35px;top:242px;font-size:11.5px;color:#000;font-weight:bold;">Балка 1</span>
<div class="cb" style="left:465px;top:243px;"></div>
<div class="row" style="top:260px;background:#fff"></div>
<span class="t" style="transform:scaleX(0.9149);left:35px;top:262px;font-size:11.5px;color:#000;font-weight:bold;">Балка 2</span>
<div class="cb" style="left:465px;top:263px;"></div>
<div class="row" style="top:280px;background:#fff"></div>
<span class="t" style="transform:scaleX(0.9149);left:35px;top:282px;font-size:11.5px;color:#000;font-weight:bold;">Балка 3</span>
<div class="cb" style="left:465px;top:283px;"></div>
<div class="grp" style="top:300px"></div>
<svg style="left:19px;top:307px;margin-left:.700px" width="7.300" height="4.600" viewBox="0 0 8 5"><path d="M0 0H8L4 5Z" fill="#333"/></svg>
<span class="t" style="transform:scaleX(0.9529);left:33px;top:302px;font-size:11.5px;color:#000;font-weight:bold;">ДОБАВИТЬ БАЛКИ ДЛЯ ЛЕВОГО СЕГМЕНТА 2 МНОГОУГОЛЬНИКА ПЛОЩАДКИ</span>
<div class="row" style="top:320px;background:#fff"></div>
<span class="t" style="transform:scaleX(0.9149);left:35px;top:322px;font-size:11.5px;color:#000;font-weight:bold;">Балка 1</span>
<div class="cb" style="left:465px;top:323px;"></div>
<div class="row" style="top:340px;background:#fff"></div>
<span class="t" style="transform:scaleX(0.9149);left:35px;top:342px;font-size:11.5px;color:#000;font-weight:bold;">Балка 2</span>
<div class="cb" style="left:465px;top:343px;"></div>
</div>
<div class="abs" style="left:586px;top:285px;width:15px;height:355px;background:#f0f0f0"></div>
<div class="abs" style="left:586px;top:302px;width:15px;height:287px;background:#cdcdcd"></div>
<svg style="left:589.5px;top:291px" width="8" height="6" viewBox="0 0 8 5"><path d="M0.500 4.500L4 1L7.500 4.500" fill="none" stroke="#484848" stroke-width="1.900"/></svg>
<svg style="left:589.5px;top:629px" width="8" height="6" viewBox="0 0 8 5"><path d="M0.500 0.500L4 4L7.500 0.500" fill="none" stroke="#484848" stroke-width="1.900"/></svg>
<div class="hdr" style="top:677px;height:16px"></div>
<svg style="left:20px;top:681px" width="4.500" height="7.500" viewBox="0 0 5 8"><path d="M0 0L5 4L0 8Z" fill="#a8a8a8"/></svg>
<svg style="left:34px;top:677.500px" width="17" height="16" viewBox="0 0 17 16"><path d="M0 1H11.500M0 5H11.500M0 9H11.500M0 13H11.500M11.500 0.500V15.300M15.500 0.500V15.300M11.500 1H15.500" stroke="#9ba5a9" stroke-width="1" fill="none"/></svg>
<span class="t" style="transform:scaleX(0.9558);left:58px;top:677px;font-size:11.5px;color:#838383;font-weight:bold;">ЖЕЛОБ НА ПЛОЩАДКЕ</span>
<div class="hdr" style="top:700px;height:16px"></div>
<svg style="left:20px;top:704px" width="4.500" height="7.500" viewBox="0 0 5 8"><path d="M0 0L5 4L0 8Z" fill="#333"/></svg>
<svg style="left:36px;top:700px" width="13" height="15" viewBox="0 0 13 15"><rect x="0.850" y="0.850" width="10.500" height="13.300" rx="1.600" fill="#fff" stroke="#2b3a42" stroke-width="1.300"/><path d="M2.600 3.500H6.700M2.600 5.500H8.700M2.600 7.500H6.700M2.600 9.500H10M2.600 11.500H10" stroke="#2b3a42" stroke-width="1"/></svg>
<span class="t" style="transform:scaleX(0.9591);left:58px;top:700px;font-size:11.5px;color:#000;font-weight:bold;">КЛАССИФИКАЦИЯ И СВОЙСТВА</span>
<div class="abs" style="left:8px;top:718px;width:598px;height:1px;background:#a0a0a0"></div>
<div class="btn" style="left:414px;top:725px;width:83px;height:22px"></div>
<span class="t" style="transform:scaleX(1.0544);left:429px;top:728px;font-size:11px;color:#000;">Отменить</span>
<div class="btn" style="left:515px;top:725px;width:83px;height:22px;border:2px solid #0f7ad8"></div>
<span class="t" style="transform:scaleX(0.9430);left:549px;top:728px;font-size:11px;color:#000;">OK</span>
<div class="abs" style="left:610px;top:746px;width:2px;height:2px;background:#a8a8a8"></div>
</div>
</body></html>
